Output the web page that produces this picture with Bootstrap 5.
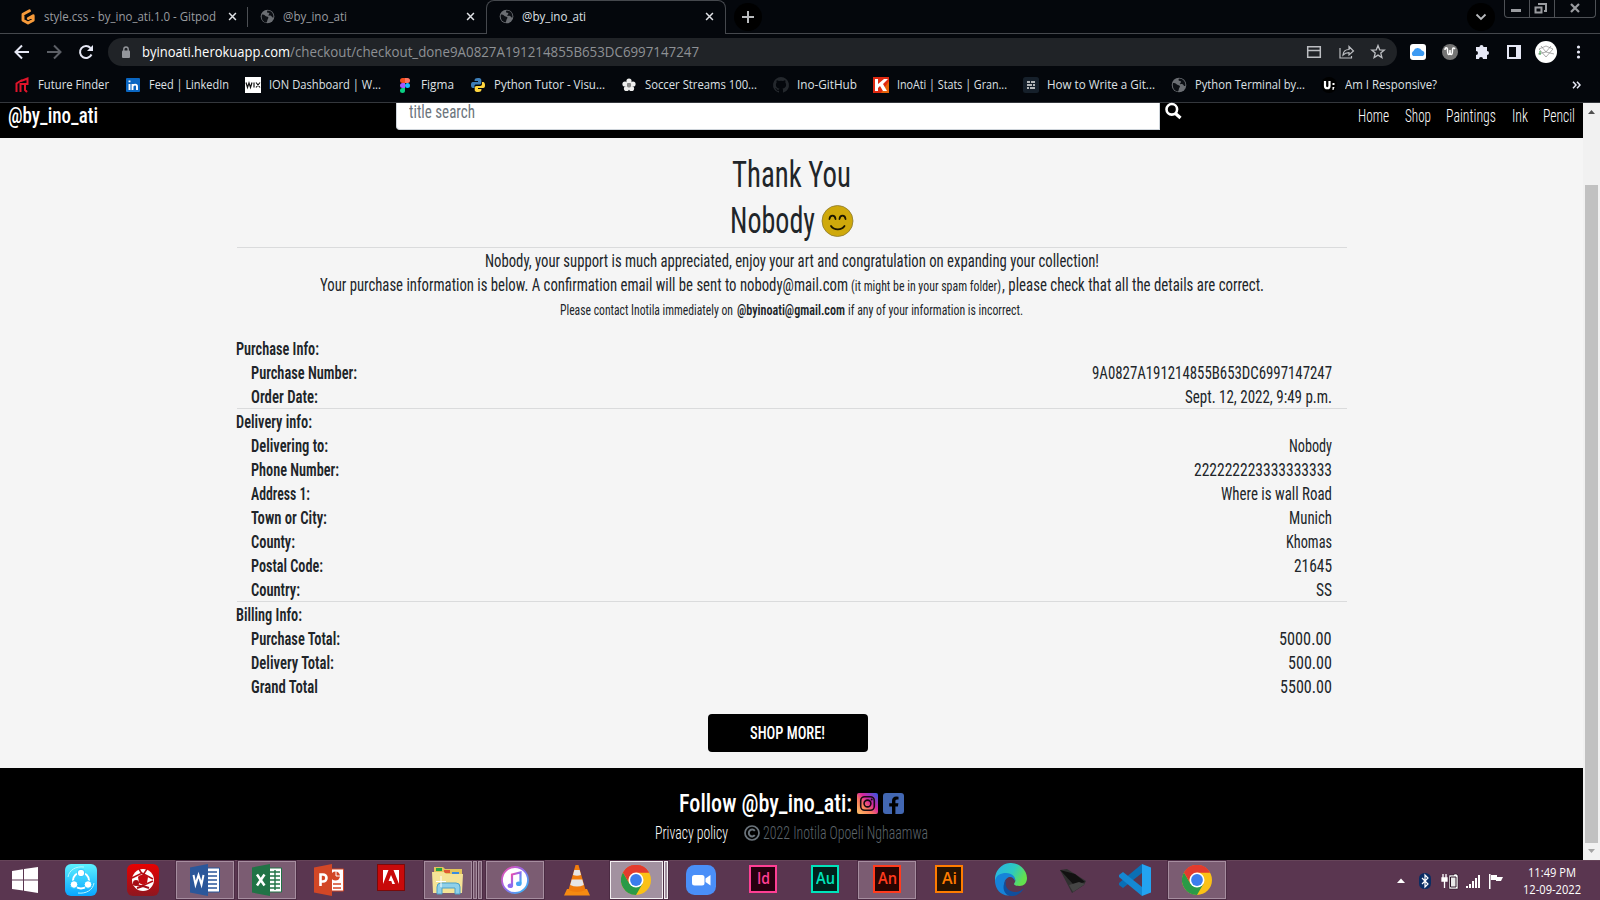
<!DOCTYPE html>
<html lang="en">
<head>
<meta charset="utf-8">
<title>@by_ino_ati</title>
<link href="https://cdn.jsdelivr.net/npm/bootstrap@5.3.0/dist/css/bootstrap.min.css" rel="stylesheet">
<style>
body{width:1600px;height:900px;overflow:hidden;background:#04070c;font-family:"Open Sans","Noto Sans",sans-serif;font-size:12px;line-height:16px}
svg{display:block;flex:none;overflow:visible}
.fit{display:inline-block;white-space:nowrap;flex:none;text-align:left}
.fit>span{display:inline-block;transform-origin:0 50%}
.ui{color:#dfe1e5}
/* tab strip */
.tabstrip{height:34px;box-shadow:inset 0 -1px #45484d;color:#9a9ca0}
.tab-item{height:33px}
.tab-one{width:247px;padding-left:20px}
.tab-two{width:238px;padding-left:11px;border-left:1px solid transparent}
.tab-sep{width:1px;height:20px;background:#4c4f54}
.tab-open{width:240px;height:34px;padding:0 11px 2px 12px;background:#04070c;border:1px solid #45484d;border-bottom:0;border-radius:8px 8px 0 0;color:#dfe1e5}
.round-btn{width:28px;height:28px;border-radius:50%;background:#000}
.win-btns{width:92px;height:18px;border:1px solid #4e5156;border-top:0;border-radius:0 0 4px 4px}
.win-btns>div+div{border-left:1px solid #4e5156}
/* toolbar */
.toolbar{height:36px}
.omnibox{width:1289px;height:28px;border-radius:14px;background:#202327;font-size:14px;color:#8e9195;padding:0 11px 0 13px}
.bookmarks{height:33px;padding:0 0 3px 14px;gap:16px;border-bottom:1px solid #34373c}
.bookmarks .bm{gap:8px}
.bm svg{width:16px;height:16px}
/* web page */
.viewport{height:757px;font-family:Roboto,"Liberation Sans Narrow",sans-serif;font-stretch:75%;font-size:17.5px;line-height:24px;color:#212529}
.site{width:1583px;background:#f5f5f5}
.site-head{height:35px;background:#000;color:#fff}
.search-box{width:764px;height:27px;line-height:18px;background:#fff;border:1px solid #ced4da;border-top:0;border-radius:0 0 0 4px;color:#6c757d;padding-left:12px}
.links{gap:15.5px;font-weight:300;font-size:17.5px}
.receipt{width:1110px;margin-left:236.5px;padding-top:13px}
.big{font-size:36.5px;line-height:46px;height:46px}
.rule{height:1px;background:#dadbdc}
.sm{font-size:14px}
.rows>div{height:24px}
.rows{margin-left:-.5px}
.lab{padding:0 15px}
.bold,.rows .t,.lab>:first-child{font-weight:600}
.shop{width:160px;height:38px;border-radius:4px;background:#000;color:#fff;margin-left:471px}
.shop,.follow{font-weight:500}
.site-foot{background:#000;color:#fff;height:92px}
.scroll{width:17px;background:#f1f1f1}
.thumb{width:13px;height:658px;background:#c1c1c1;margin-top:65px}
/* taskbar */
.taskbar{height:40px;background:#5a3650;border-top:1px solid #664459;color:#fff}
.apps{gap:4px;padding-top:0}
.slot{width:58px;height:38px}
.start{width:52px;padding-right:2px;margin-right:-4px}
.lit{background:#7b5c72;border:1px solid #a68d9f;outline:1px solid #4b2b43;outline-offset:0}
.lit.front{background:#a291a0;border-color:#f2eef1}
.stack{gap:1px}
.edge{width:4px}
.adobe{width:28px;height:28px;border:2px solid;font-family:"Open Sans",sans-serif;font-size:16px;font-weight:600;line-height:23px}
.clock{font-size:12px;line-height:17px;width:58px}
</style>
</head>
<body>
<svg width="0" height="0" class="position-absolute">
<defs>
<symbol id="globe" viewBox="0 0 16 16"><circle cx="8" cy="8" r="7.3" fill="#6b6e73"/><path d="M2 6c3-.5 3 1.500 5 2s2.500 1 1.500 2.500S8 13 7 14.500C3.500 14 1 11 2 6zM8 1.500c-1 1.500-.5 2.500 1 2.500s1 1.500 0 2.500 2 .5 3 1 .5 2 2.300 1.500C15 5 12 1.500 8 1.500z" fill="#0c0f14"/></symbol>
<symbol id="close" viewBox="0 0 10 10"><path d="M1.200 1.200l7.600 7.600M8.800 1.200l-7.600 7.600" stroke="currentColor" stroke-width="1.700"/></symbol>
<symbol id="chrome" viewBox="0 0 30 30"><circle cx="15" cy="15" r="15" fill="#fbc116"/><path d="M15 15L2 7.500A15 15 0 0 1 28 7.500H15z" fill="#e33b2e"/><path d="M2 7.500A15 15 0 0 0 15 30l6.500-11.300L15 15 8.500 18.700z" fill="#2a9a47"/><path d="M2 7.500A15 15 0 0 1 28 7.500H15A7.500 7.500 0 0 0 8.500 18.700z" fill="#e33b2e"/><circle cx="15" cy="15" r="7.500" fill="#fff"/><circle cx="15" cy="15" r="5.900" fill="#3b7ded"/></symbol>
<linearGradient id="gShare" x2="0" y2="1"><stop stop-color="#5df0ff"/><stop offset="1" stop-color="#08a6ff"/></linearGradient>
<linearGradient id="gRed" x2="0" y2="1"><stop stop-color="#e80000"/><stop offset="1" stop-color="#8e1720"/></linearGradient>
<linearGradient id="gTune" x2="1" y2="1"><stop stop-color="#f34aa8"/><stop offset=".5" stop-color="#8d6df0"/><stop offset="1" stop-color="#25c3f3"/></linearGradient>
<linearGradient id="gInsta" x1="0" y1="1" x2="1" y2="0"><stop stop-color="#fdc468"/><stop offset=".35" stop-color="#fa7e5a"/><stop offset=".6" stop-color="#d6249f"/><stop offset="1" stop-color="#285aeb"/></linearGradient>
<linearGradient id="gEdge" x2="1" y2=".4"><stop stop-color="#28b1e8"/><stop offset=".6" stop-color="#2dc9c0"/><stop offset="1" stop-color="#63e14e"/></linearGradient>
</defs>
</svg>

<div class="tabstrip d-flex position-relative">
  <div class="tab-item tab-one d-flex align-items-center">
    <svg width="16" height="16" viewBox="0 0 16 16"><path d="M9.500 1.800L3 5.200v6L8 14l5.200-2.800V6.800L8.300 9.600" fill="none" stroke="#f79a3a" stroke-width="2.900" stroke-linejoin="round" stroke-linecap="round"/></svg>
    <span class="fit ms-2" data-w="172">style.css - by_ino_ati.1.0 - Gitpod</span>
    <svg class="ui" style="margin-left:12px" width="9" height="9"><use href="#close"/></svg>
  </div>
  <div class="tab-sep align-self-center"></div>
  <div class="tab-item tab-two d-flex align-items-center">
    <svg width="15" height="15"><use href="#globe"/></svg>
    <span class="fit ms-2" data-w="64">@by_ino_ati</span>
    <svg class="ui ms-auto" style="margin-right:11px" width="9" height="9"><use href="#close"/></svg>
  </div>
  <div class="tab-open d-flex align-items-center">
    <svg width="15" height="15"><use href="#globe"/></svg>
    <span class="fit ms-2" data-w="64">@by_ino_ati</span>
    <svg class="ms-auto" width="9" height="9"><use href="#close"/></svg>
  </div>
  <div class="round-btn d-flex align-items-center justify-content-center align-self-center" style="margin-left:8px">
    <svg width="12" height="12"><path d="M6 0v12M0 6h12" stroke="#b9bbbe" stroke-width="2"/></svg>
  </div>
  <div class="round-btn d-flex align-items-center justify-content-center align-self-center ms-auto">
    <svg width="10" height="6"><path d="M.5.500L5 5 9.500.500" fill="none" stroke="#b9bbbe" stroke-width="1.800"/></svg>
  </div>
  <div class="win-btns d-flex" style="margin:0 4px 0 9px">
    <div style="width:25px"><svg width="24" height="17"><path d="M6 9h10v3H6z" fill="#9a9ca0"/></svg></div>
    <div style="width:25px"><svg width="24" height="17"><path d="M8 4V4h8v7h-2M5.500 7.500h6v5h-6z" fill="none" stroke="#9a9ca0" stroke-width="2"/></svg></div>
    <div class="flex-fill"><svg width="40" height="17"><path d="M16 4l8 8M24 4l-8 8" stroke="#9a9ca0" stroke-width="2.200"/></svg></div>
  </div>
</div>

<div class="toolbar d-flex align-items-center">
  <svg width="108" height="28" fill="none" stroke-width="2"><path d="M29 14H16M22 7.500L15.500 14l6.500 6.500" stroke="#e6e8f5"/><path d="M47 14h13M54 7.500l6.500 6.500-6.500 6.500" stroke="#5c5f66"/><path d="M91.500 16.500A6 6 0 1 1 90.500 10" stroke="#e6e8f5"/><path d="M93 7v6h-6z" fill="#e6e8f5"/></svg>
  <div class="omnibox d-flex align-items-center">
    <svg width="10" height="13"><rect y="4.500" x="1" width="8" height="7.500" rx="1" fill="#93969b"/><path d="M2.800 5V3.200a2.200 2.200 0 0 1 4.400 0V5" fill="none" stroke="#93969b" stroke-width="1.400"/></svg>
    <span class="fit text-white" style="margin-left:11px" data-w="148">byinoati.herokuapp.com</span><span class="fit" data-w="409">/checkout/checkout_done9A0827A191214855B653DC6997147247</span>
    <svg class="ms-auto" width="80" height="18" fill="none" stroke="#bcbec2" stroke-width="1.500"><path d="M1.700 3.700h12.600v10.600H1.700zM1.700 7.500h12.600" /><path d="M34 5v10h11.500v-2M37 12c.3-3.600 3-5.500 6-5.500V3.500L47.500 8 43 12V9.600c-3 0-4.500.8-6 2.400z" stroke-width="1.200"/><path d="M72 2.500l1.700 4.300 4.600.3-3.500 3 1.100 4.500L72 12.100l-3.900 2.500 1.100-4.500-3.500-3 4.600-.3z" stroke-width="1.300"/></svg>
  </div>
  <svg width="203" height="28"><rect x="13" y="6" width="16" height="16" rx="3" fill="#fff"/><path d="M16 18a3 3 0 0 1 .5-5 4.500 4.500 0 0 1 8.300-.5A3 3 0 0 1 26 18z" fill="#3d9bf3"/><circle cx="53" cy="14" r="8" fill="#747474"/><path d="M48 12c0-3 2.500-3 2.500 0 0 6 2.500 6 2.500 0 0 6 2.500 6 2.500 0 0-2 1-3 2.500-1" fill="none" stroke="#fff" stroke-width="1.500"/><path d="M79 9h3.500a2 2 0 0 1 4 0H90v4a2 2 0 0 1 0 4v4h-4a2 2 0 0 0-4 0h-3v-4a2 2 0 0 0 0-4z" fill="#e6e8f5"/><path d="M110 7h14v14h-14zM112 9v10h7V9z" fill="#e6e8f5" fill-rule="evenodd"/><circle cx="149" cy="14" r="11" fill="#fff"/><path d="M142 11l7 8 7-8-7-3zM144 8l5 6 5-6M141 16l8-2 8 2" fill="none" stroke="#888" stroke-width=".7"/><path d="M143 13v4" stroke="#2a9d3a"/><g fill="#e6e8f5"><circle cx="181.500" cy="9" r="1.600"/><circle cx="181.500" cy="14" r="1.600"/><circle cx="181.500" cy="19" r="1.600"/></g></svg>
</div>

<div class="bookmarks ui d-flex align-items-center">
  <div class="bm d-flex"><svg viewBox="0 0 16 16"><path d="M2.500 15V6.500L8 3M6.500 15V7h7V1.500L7 4M11 8v5l2 2" fill="none" stroke="#e0142a" stroke-width="2"/></svg><span class="fit" data-w="71">Future Finder</span></div>
  <div class="bm d-flex"><svg viewBox="0 0 16 16"><rect x="1" y="1" width="14" height="14" rx="1" fill="#0a66c2"/><path d="M4.500 7v6M4.500 3.500v1.800M7.500 13V7M7.500 9.500C8.500 7 12 7 12 9.500V13" fill="none" stroke="#fff" stroke-width="1.900"/></svg><span class="fit" data-w="80">Feed | LinkedIn</span></div>
  <div class="bm d-flex"><svg viewBox="0 0 16 16"><path fill="#fff" d="M0 0h16v16H0z"/><path d="M1 5.500l1.500 5L4 6l1.500 4.500L7 5.500M9 5.500v5M11 5.500l4 5M15 5.500l-4 5" fill="none" stroke="#111" stroke-width="1.200"/></svg><span class="fit" data-w="112">ION Dashboard | W...</span></div>
  <div class="bm d-flex"><svg viewBox="0 0 16 16"><path d="M8 1H5.500a2.500 2.500 0 0 0 0 5H8z" fill="#f24e1e"/><path d="M8 1h2.500a2.500 2.500 0 0 1 0 5H8z" fill="#ff7262"/><path d="M8 6H5.500a2.500 2.500 0 0 0 0 5H8z" fill="#a259ff"/><circle cx="10.500" cy="8.500" r="2.500" fill="#1abcfe"/><path d="M8 11H5.500A2.500 2.500 0 1 0 8 13.500z" fill="#0acf83"/></svg><span class="fit" data-w="33">Figma</span></div>
  <div class="bm d-flex"><svg viewBox="0 0 16 16"><path d="M8 1C5 1 4.500 2 4.500 4H8v1H3C1 5 1 7 1 8s.3 3 2 3h1.500V9C4.500 8 5 7.500 6 7.500h3.500c1 0 1.800-.8 1.800-1.800V3C11.300 1.500 10 1 8 1z" fill="#3d7eb8"/><path d="M8 15c3 0 3.500-1 3.500-3H8v-1h5c2 0 2-2 2-3s-.3-3-2-3h-1v2c0 1-.8 2-1.800 2H6.500c-1 0-1.800.8-1.800 1.800V13c0 1.500 1.300 2 3.300 2z" fill="#ffd63e"/></svg><span class="fit" data-w="111">Python Tutor - Visu...</span></div>
  <div class="bm d-flex"><svg viewBox="0 0 16 16"><g fill="#eee"><circle cx="8" cy="4" r="2.600"/><circle cx="4" cy="7" r="2.600"/><circle cx="12" cy="7" r="2.600"/><circle cx="5.500" cy="11.500" r="2.600"/><circle cx="10.500" cy="11.500" r="2.600"/></g><path d="M8 6l2.200 1.600-.8 2.600H6.600l-.8-2.600z" fill="#888"/></svg><span class="fit" data-w="112">Soccer Streams 100...</span></div>
  <div class="bm d-flex"><svg viewBox="0 0 16 16"><path fill="#24282d" d="M8 0a8 8 0 0 0-2.500 15.600c.4.100.5-.2.500-.4v-1.400c-2.200.5-2.700-1-2.700-1-.4-.9-.9-1.200-.9-1.200-.7-.5.100-.5.100-.5.800.1 1.200.8 1.200.8.700 1.300 1.900.9 2.300.7.100-.5.300-.9.500-1.100-1.800-.2-3.600-.9-3.600-4 0-.9.300-1.600.8-2.100-.1-.2-.4-1 .1-2.100 0 0 .7-.2 2.200.8a7.500 7.500 0 0 1 4 0c1.500-1 2.200-.8 2.200-.8.400 1.100.2 1.900.1 2.100.5.600.8 1.300.8 2.100 0 3.100-1.900 3.800-3.700 4 .3.300.6.800.6 1.500v2.200c0 .2.100.5.500.4A8 8 0 0 0 8 0z"/></svg><span class="fit" data-w="60">Ino-GitHub</span></div>
  <div class="bm d-flex"><svg viewBox="0 0 16 16"><path fill="#e02a12" d="M0 0h16v16H0z"/><path d="M8 16L16 4v12z" fill="#e8630a"/><path d="M2 2h3v5l6-5h4l-5 5 4 7h-4L7 9 5 11v3H2z" fill="#fff"/></svg><span class="fit" data-w="110">InoAti | Stats | Gran...</span></div>
  <div class="bm d-flex"><svg viewBox="0 0 16 16"><rect width="16" height="16" rx="2.500" fill="#16202b"/><path d="M4 5h3M8 5h4M4 8h5M10 8h2M4 11h2M7 11h5" stroke="#e8e8e8" stroke-width="1.500"/></svg><span class="fit" data-w="108">How to Write a Git...</span></div>
  <div class="bm d-flex"><svg><use href="#globe"/></svg><span class="fit" data-w="110">Python Terminal by...</span></div>
  <div class="bm d-flex"><svg viewBox="0 0 16 16"><circle cx="8" cy="8" r="8" fill="#000"/><path d="M4 4v5c0 3 4.500 3 4.500 0V4" fill="none" stroke="#fff" stroke-width="2.200"/><path d="M11.500 6h2v2h-2zM11.500 10h2l-1 3h-1z" fill="#fff"/></svg><span class="fit" data-w="92">Am I Responsive?</span></div>
  <svg class="ms-auto" style="margin-right:19px" width="9" height="8"><path d="M1 .7L4 4 1 7.300M5 .7L8 4 5 7.300" fill="none" stroke="#e6e8f5" stroke-width="1.500"/></svg>
</div>

<div class="viewport d-flex">
  <div class="site">
    <header class="site-head d-flex">
      <div style="width:396px;padding:1px 0 0 8px;font-size:21.500px;font-weight:500"><span class="fit" data-w="90">@by_ino_ati</span></div>
      <div class="search-box"><span class="fit" data-w="66">title search</span></div>
      <svg class="ms-1" width="18" height="18"><circle cx="7.800" cy="6.300" r="5.300" fill="none" stroke="#fff" stroke-width="2.600"/><path d="M11.500 10.500l5 4.500" stroke="#fff" stroke-width="3.200"/></svg>
      <nav class="links d-flex ms-auto" style="padding:1px 8px 0 0">
        <span class="fit" data-w="31">Home</span><span class="fit" data-w="26">Shop</span><span class="fit" data-w="50">Paintings</span><span class="fit" data-w="16">Ink</span><span class="fit" data-w="32">Pencil</span>
      </nav>
    </header>
    <main style="height:630px">
      <div class="receipt">
        <div class="big text-center" style="padding-top:1px"><span class="fit" style="margin-left:-1px" data-w="119">Thank You</span></div>
        <div class="big d-flex justify-content-center align-items-center" style="padding-top:1px"><span class="fit" data-w="85">Nobody</span>
          <svg style="margin-left:7px" width="32" height="32"><circle cx="15.500" cy="16" r="15.500" fill="#cfa90b" stroke="#8b7a32" stroke-width=".8"/><path d="M7.500 14c.5-4.500 5.500-4.500 6 0M17.500 14c.5-4.500 5.500-4.500 6 0M9 21c3 4.500 10.500 4.500 13.500 0" fill="none" stroke="#1b1600" stroke-width="1.800" stroke-linecap="round"/></svg>
        </div>
        <div class="rule mt-1"></div>
        <div class="text-center" style="height:89px;padding-top:1px">
          <div><span class="fit" data-w="614">Nobody, your support is much appreciated, enjoy your art and congratulation on expanding your collection!</span></div>
          <div class="d-flex justify-content-center align-items-baseline"><span class="fit" data-w="528">Your purchase information is below. A confirmation email will be sent to nobody@mail.com</span><span class="fit sm" style="margin-left:3px" data-w="150">(it might be in your spam folder)</span><span class="fit" style="margin-left:1px" data-w="262">, please check that all the details are correct.</span></div>
          <div class="d-flex justify-content-center sm"><span class="fit" data-w="173">Please contact Inotila immediately on</span><span class="fit bold" style="margin:0 3px 0 4px" data-w="108">@byinoati@gmail.com</span><span class="fit" data-w="175">if any of your information is incorrect.</span></div>
        </div>
        <div class="rows">
          <div class="t"><span class="fit" data-w="83">Purchase Info:</span></div>
          <div class="lab d-flex justify-content-between"><span class="fit" data-w="106">Purchase Number:</span><span class="fit" data-w="240">9A0827A191214855B653DC6997147247</span></div>
          <div class="lab d-flex justify-content-between"><span class="fit" data-w="67">Order Date:</span><span class="fit" data-w="147">Sept. 12, 2022, 9:49 p.m.</span></div>
        </div>
        <div class="rule" style="margin-top:-1px"></div>
        <div class="rows" style="padding-top:1px">
          <div class="t"><span class="fit" data-w="76">Delivery info:</span></div>
          <div class="lab d-flex justify-content-between"><span class="fit" data-w="77">Delivering to:</span><span class="fit" data-w="43">Nobody</span></div>
          <div class="lab d-flex justify-content-between"><span class="fit" data-w="88">Phone Number:</span><span class="fit" data-w="138">222222223333333333</span></div>
          <div class="lab d-flex justify-content-between"><span class="fit" data-w="59">Address 1:</span><span class="fit" data-w="111">Where is wall Road</span></div>
          <div class="lab d-flex justify-content-between"><span class="fit" data-w="76">Town or City:</span><span class="fit" data-w="43">Munich</span></div>
          <div class="lab d-flex justify-content-between"><span class="fit" data-w="44">County:</span><span class="fit" data-w="46">Khomas</span></div>
          <div class="lab d-flex justify-content-between"><span class="fit" data-w="72">Postal Code:</span><span class="fit" data-w="38">21645</span></div>
          <div class="lab d-flex justify-content-between"><span class="fit" data-w="49">Country:</span><span class="fit" data-w="16">SS</span></div>
        </div>
        <div class="rule" style="margin-top:-1px"></div>
        <div class="rows" style="padding-top:1px">
          <div class="t"><span class="fit" data-w="66">Billing Info:</span></div>
          <div class="lab d-flex justify-content-between"><span class="fit" data-w="89">Purchase Total:</span><span class="fit" data-w="52.5">5000.00</span></div>
          <div class="lab d-flex justify-content-between"><span class="fit" data-w="83">Delivery Total:</span><span class="fit" data-w="44">500.00</span></div>
          <div class="lab d-flex justify-content-between"><span class="fit" data-w="67">Grand Total</span><span class="fit" data-w="52">5500.00</span></div>
        </div>
        <div class="shop d-flex align-items-center justify-content-center" style="margin-top:15px"><span class="fit" data-w="75">SHOP MORE!</span></div>
      </div>
    </main>
    <footer class="site-foot d-flex flex-column align-items-center">
      <div class="follow d-flex align-items-center" style="height:30px;margin-top:20px;font-size:26.500px;line-height:30px"><span class="fit" data-w="173">Follow @by_ino_ati:</span>
        <svg style="margin-left:5px" width="21" height="21"><rect width="21" height="21" rx="2" fill="url(#gInsta)"/><rect x="3.700" y="3.700" width="13.600" height="13.600" rx="4" fill="none" stroke="#160a12" stroke-width="1.600"/><circle cx="10.500" cy="10.500" r="3.400" fill="none" stroke="#160a12" stroke-width="1.600"/><circle cx="14.700" cy="6.400" r="1" fill="#160a12"/></svg>
        <svg style="margin-left:5px" width="21" height="21"><rect width="21" height="21" rx="3" fill="#4267b2"/><path d="M9 21v-7.500H6.200V10.300H9V8c0-3 1.700-4.500 4.200-4.500l2.300.2v2.700h-1.400c-1.300 0-1.700.8-1.700 1.600v2.300h3l-.5 3.200h-2.500V21z" fill="#000"/></svg>
      </div>
      <div class="d-flex align-items-center" style="height:28px;margin-top:1px;font-weight:300"><span class="fit" data-w="73">Privacy policy</span>
        <svg class="ms-3" width="16" height="16" fill="none" stroke="#6c757d" stroke-width="1.700"><circle cx="8" cy="8" r="7"/><path d="M10.800 10.200a3.400 3.400 0 1 1 0-4.400" stroke-width="2"/></svg>
        <span class="fit" style="margin-left:3px;color:#5d656c" data-w="165">2022 Inotila Opoeli Nghaamwa</span></div>
    </footer>
  </div>
  <div class="scroll d-flex flex-column align-items-center">
    <svg width="17" height="17"><path d="M5 11l3.500-4 3.500 4z" fill="#505050"/></svg>
    <div class="thumb"></div>
    <svg width="17" height="17"><path d="M5 6l3.500 4L12 6z" fill="#a3a3a3"/></svg>
  </div>
</div>

<div class="taskbar d-flex">
  <div class="apps d-flex">
    <div class="slot start d-flex align-items-center justify-content-center"><svg width="26" height="26" fill="#fff"><path d="M0 4l11-1.700V12.500H0zM12 2.100L26 0v12.500H12zM0 13.500h11v10L0 22zM12 13.500h14V26l-14-2.200z"/></svg></div>
    <div class="slot d-flex align-items-center justify-content-center"><svg width="32" height="32"><rect width="32" height="32" rx="6" fill="url(#gShare)"/><path d="M3 13C4 6 11 2 19 3M29 19c-1 7-8 11-16 10" fill="none" stroke="#b9f6ff" stroke-width="1"/><circle cx="16" cy="16.500" r="8" fill="none" stroke="#fff" stroke-width="2"/><g fill="#fff" stroke="#23c4ff"><circle cx="16" cy="9" r="3.800"/><circle cx="9" cy="20.500" r="3.800"/><circle cx="23" cy="20.500" r="3.800"/></g></svg></div>
    <div class="slot d-flex align-items-center justify-content-center"><svg width="32" height="32"><rect width="32" height="32" rx="6" fill="url(#gRed)"/><circle cx="16" cy="16" r="11" fill="#fff"/><path d="M5 14l10-5 11 6M6 20l9 2 11-5M12 5l3 5M20 5l-4 6M16 10v7" fill="none" stroke="#b50c12" stroke-width="1.500"/><path d="M11 13c2-3 8-3 10 0l-1 6-4 2-4-2z" fill="#c20b11"/><circle cx="9" cy="19" r="3" fill="#a50b14"/><path d="M10 24l6-2 6 2" stroke="#a50b14" stroke-width="2" fill="none"/></svg></div>
    <div class="slot lit d-flex align-items-center justify-content-center"><svg width="30" height="32"><path d="M17 4h12.500v24H17z" fill="#fff" stroke="#2b579a"/><path d="M18 8h9M18 12h9M18 16h9M18 20h9M18 24h9" stroke="#2b579a" stroke-width="1.500"/><path d="M0 3.500L18 0v32L0 28.500z" fill="#2b579a"/><path d="M3.500 11l2 9.500 3-9.500 3 9.500 2-9.500" fill="none" stroke="#fff" stroke-width="2"/></svg></div>
    <div class="slot lit d-flex align-items-center justify-content-center"><svg width="30" height="32"><path d="M17 4h12.500v24H17z" fill="#fff" stroke="#217346"/><path d="M18 8h10M18 12h10M18 16h10M18 20h10M18 24h10M23 6v20" stroke="#217346" stroke-width="1.400"/><path d="M0 3.500L18 0v32L0 28.500z" fill="#217346"/><path d="M5 10.500l7.500 11M12.500 10.500L5 21.500" stroke="#fff" stroke-width="2.500"/></svg></div>
    <div class="slot d-flex align-items-center justify-content-center"><svg width="30" height="32"><path d="M17 5h12.500v22H17z" fill="#fff" stroke="#d24726"/><circle cx="21.500" cy="12" r="4.500" fill="#d24726"/><path d="M22 12V6.500M22 12h5" stroke="#fff"/><path d="M19 20h8M19 24h8" stroke="#d24726" stroke-width="1.500"/><path d="M0 3.500L18 0v32L0 28.500z" fill="#d24726"/><path d="M6.500 22V10.500H9a3.500 3.500 0 0 1 0 7H6.500" fill="none" stroke="#fff" stroke-width="2.600"/></svg></div>
    <div class="slot d-flex justify-content-center"><svg width="28" height="32" style="margin-top:1px"><path d="M0 2h28v27H0z" fill="#7b0a0a"/><path d="M1 3h26v25H1z" fill="#c80a0a"/><path d="M6 22V8h5.500zM22 22V8h-5.500zM14 13l4 9h-2.700l-1-3h-2.700z" fill="#fff"/></svg></div>
    <div class="slot stack d-flex">
      <div class="lit d-flex align-items-center justify-content-center" style="width:50px"><svg width="32" height="30"><path d="M2 2h9l2 2h17v23H2z" fill="#e3c55b"/><path d="M4 3h6v3H4z" fill="#27a343"/><path d="M12 5h6v3h-6z" fill="#e05a33"/><path d="M20 7h7v3h-7z" fill="#3a8de0"/><path d="M0 7h12l2 2h17l-1 19H1z" fill="#f5e396"/><path d="M5 29V22q0-4 4-4h15q4 0 4 4v7h-5v-6H10v6z" fill="#8fd0ea" stroke="#4a9fc8"/><path d="M9 11v11M4 16.500h10" stroke="#fff"/></svg></div>
      <div class="lit edge"></div><div class="lit edge"></div>
    </div>
    <div class="slot lit d-flex align-items-center justify-content-center"><svg width="28" height="28"><circle cx="14" cy="14" r="13" fill="#fff" stroke="url(#gTune)" stroke-width="1.800"/><path d="M11 19.500V8.500L19.500 6.500V17.500" fill="none" stroke="url(#gTune)" stroke-width="2.200"/><ellipse cx="9.300" cy="19.700" rx="2.800" ry="2.300" fill="#8d6df0"/><ellipse cx="17.800" cy="17.700" rx="2.800" ry="2.300" fill="#46a4f2"/></svg></div>
    <div class="slot d-flex align-items-center justify-content-center"><svg width="26" height="31"><path d="M3 24h20l3 6.500H0z" fill="#f58a12"/><path d="M11.500 0h3l7 25q-8.500 4-17 0z" fill="#f07c0c"/><path d="M10.300 5h5.400l1.300 5q-4 1.500-8 0zM7.700 14.500h10.600l1.500 5.500q-6.800 3-13.600 0z" fill="#e6e6e6"/></svg></div>
    <div class="slot stack d-flex">
      <div class="lit front d-flex align-items-center justify-content-center" style="width:53px;padding-right:1px"><svg width="30" height="30"><use href="#chrome"/></svg></div>
      <div class="lit front edge"></div>
    </div>
    <div class="slot d-flex align-items-center justify-content-center"><svg width="30" height="30"><rect width="30" height="30" rx="8.500" fill="#4a8ff8"/><rect x="6" y="10" width="12.500" height="10.500" rx="2.500" fill="#fff"/><path d="M19.500 13.500l5-3.500v10.500l-5-3.500z" fill="#fff"/></svg></div>
    <div class="slot d-flex justify-content-center"><div class="adobe text-center mt-1" style="color:#ff3f94;background:#26000f"><span class="fit" data-w="13">Id</span></div></div>
    <div class="slot d-flex justify-content-center"><div class="adobe text-center mt-1" style="color:#00e4bb;background:#00211b"><span class="fit" data-w="19">Au</span></div></div>
    <div class="slot lit d-flex justify-content-center"><div class="adobe text-center" style="margin-top:3px;color:#ff3b1e;background:#270400"><span class="fit" data-w="19">An</span></div></div>
    <div class="slot d-flex justify-content-center"><div class="adobe text-center mt-1" style="color:#ff7c00;background:#261300"><span class="fit" data-w="15">Ai</span></div></div>
    <div class="slot d-flex align-items-center justify-content-center"><svg width="32" height="32"><path d="M0 16a16 16 0 0 1 32-2c0 5-3 8-7.500 8-4 0-6.500-1.300-5-3 2-2.500.5-7-5-7C8 12 2 14 0 19z" fill="url(#gEdge)"/><path d="M0 17c1-6 6-8 11-8 6 0 10 4 9 8-1-3-4-5-7-3.500-6 3-4 12 1 18C6 32 0 25 0 17z" fill="#1683d8"/><path d="M12 15c-4 6 1 13 8 13 4 0 8-2 9-4.500C27 29 22 32 16 32 8 31 6 21 12 15z" fill="#104f9e"/></svg></div>
    <div class="slot d-flex align-items-center justify-content-center"><svg width="26" height="26"><path d="M0 3l7-1 19 12-2 4-12 8z" fill="#303030"/><path d="M0 3l15 4 10 8-11 3z" fill="#111"/><path d="M9 18l10-3 6 2-12 8z" fill="#454545"/></svg></div>
    <div class="slot d-flex align-items-center justify-content-center"><svg width="32" height="32"><path d="M23 0l9 3.500v25L23 32z" fill="#23a3f1"/><path d="M23 0v9L4 24 0 21v-2z" fill="#0a6fb5"/><path d="M23 32v-9L4 8 0 11v2z" fill="#1488d3"/></svg></div>
    <div class="slot lit d-flex align-items-center justify-content-center"><svg width="30" height="30"><use href="#chrome"/></svg></div>
  </div>
  <svg class="ms-auto" width="110" height="39" fill="#fff"><path d="M1 22l4-4.500L9 22z"/><rect x="23" y="12" width="12" height="16" rx="5.500" fill="#0a2d63"/><path d="M26 17l6 6-3 3V14l3 3-6 6" fill="none" stroke="#fff" stroke-width="1.200"/><path d="M53 14h5v-1h3v1h1v14h-9z" stroke="#2a1525" stroke-width=".6"/><path d="M54.500 16h5.500v10h-5.500z" fill="#e9e9e9" stroke="#2a1525"/><path d="M47 13v4M50 13v4M46 17h5v3h-5zM48.500 20v7" stroke="#fff" stroke-width="1.300"/><path d="M70 25h2v2h-2zM73 23h2v4h-2zM76 20h2v7h-2zM79 17h2v10h-2zM82 14h2v13h-2z"/><path d="M93 13h1.500v15H93zM95 14h6v2h6l-2 4h-5v-1h-5z"/></svg>
  <div class="clock text-center" style="margin:3px 19px 0 17px"><div><span class="fit" data-w="48">11:49 PM</span></div><div><span class="fit" data-w="58">12-09-2022</span></div></div>
</div>

<script src="https://cdn.jsdelivr.net/npm/bootstrap@5.3.0/dist/js/bootstrap.bundle.min.js"></script>
<script>
document.querySelectorAll('.fit').forEach(el => {
  const inner = document.createElement('span');
  inner.textContent = el.textContent;
  el.textContent = '';
  el.appendChild(inner);
  const natural = inner.getBoundingClientRect().width;
  el.style.width = el.dataset.w + 'px';
  inner.style.transform = 'scaleX(' + el.dataset.w / natural + ')';
});
</script>
</body>
</html>
